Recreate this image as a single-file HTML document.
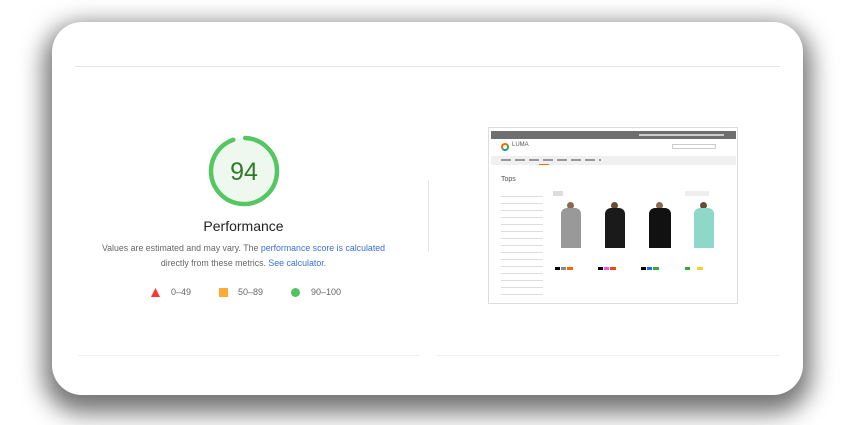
<!DOCTYPE html>
<html><head><style>
*{margin:0;padding:0;box-sizing:border-box}
body{width:853px;height:425px;background:#fff;position:relative;overflow:hidden;font-family:"Liberation Sans",sans-serif}
.card{position:absolute;left:52px;top:22px;width:751px;height:373px;background:#fff;border-radius:30px;box-shadow:0 10px 24px 8px rgba(0,0,0,.55)}
.abs{position:absolute}
.line{position:absolute;height:1px;background:#e8e8e8}
.t{position:absolute;white-space:nowrap}
</style></head><body>
<div class="card"></div>
<div class="line" style="left:75px;top:66px;width:705px;background:#e4e4e4"></div>
<div class="line" style="left:78px;top:355px;width:342px;background:#f0f0f0"></div>
<div class="line" style="left:437px;top:355px;width:343px;background:#f0f0f0"></div>
<div class="abs" style="left:428px;top:180px;width:1px;height:72px;background:#e6e6e6"></div>

<svg class="abs" style="left:204px;top:131px" width="80" height="80" viewBox="0 0 80 80">
<circle cx="40" cy="40" r="33" fill="#eef8ef"/>
<circle cx="40" cy="40" r="33" fill="none" stroke="#56c662" stroke-width="4.5" stroke-dasharray="194.9 207.3" transform="rotate(-88 40 40)" stroke-linecap="round"/>
<text x="40" y="49" text-anchor="middle" font-family="Liberation Sans" font-size="25" fill="#2f7a2a">94</text>
</svg>
<div class="t" style="left:0;width:487px;text-align:center;top:218px;font-size:14px;color:#212121">Performance</div>
<div class="t" style="left:0;width:487px;text-align:center;top:243px;font-size:8.8px;color:#666">Values are estimated and may vary. The <span style="color:#3b6fd6">performance score is calculated</span></div>
<div class="t" style="left:0;width:487px;text-align:center;top:258px;font-size:8.8px;color:#666">directly from these metrics. <span style="color:#3b6fd6">See calculator.</span></div>
<svg class="abs" style="left:150px;top:287px" width="11" height="11"><polygon points="5.5,1 10,10 1,10" fill="#f33"/></svg>
<div class="t" style="left:171px;top:287px;font-size:9px;color:#666">0–49</div>
<div class="abs" style="left:219px;top:288px;width:9px;height:9px;background:#fa3"></div>
<div class="t" style="left:238px;top:287px;font-size:9px;color:#666">50–89</div>
<div class="abs" style="left:291px;top:288px;width:9px;height:9px;border-radius:50%;background:#52c45f"></div>
<div class="t" style="left:311px;top:287px;font-size:9px;color:#666">90–100</div>

<!-- thumbnail -->
<div class="abs" style="left:488px;top:127px;width:250px;height:177px;border:1px solid #ddd;background:#fff;overflow:hidden">
 <div class="abs" style="left:2px;top:3px;width:245px;height:8px;background:#6e6e6e"></div>
 <div class="abs" style="left:150px;top:6px;width:85px;height:2px;background:#ccc"></div>
 <div class="abs" style="left:12px;top:15px;width:8px;height:8px;border-radius:50%;border:2px solid #f60;border-right-color:#3a3;border-bottom-color:#09c"></div>
 <div class="t" style="left:23px;top:14px;font-size:6px;color:#555">LUMA</div>
 <div class="abs" style="left:183px;top:16px;width:44px;height:5px;border:1px solid #ccc"></div>
 <div class="abs" style="left:2px;top:28px;width:245px;height:9px;background:#f0f0f0"></div>
 <div class="abs" style="left:12px;top:31px;width:100px;height:2px;background:repeating-linear-gradient(90deg,#999 0 10px,transparent 10px 14px)"></div>
 <div class="abs" style="left:50px;top:36px;width:10px;height:1px;background:#f60"></div>
 <div class="t" style="left:12px;top:48px;font-size:7px;color:#555">Tops</div>
 <div class="abs" style="left:12px;top:62px;width:42px;height:110px;background:repeating-linear-gradient(180deg,#fff 0 6px,#ddd 6px 7px)"></div>
 <div class="abs" style="left:64px;top:63px;width:10px;height:5px;background:#ddd"></div>
 <div class="abs" style="left:196px;top:63px;width:24px;height:5px;background:#eee"></div>
 <div class="abs" style="left:78px;top:74px;width:7px;height:7px;border-radius:50%;background:#8a6a50"></div>
 <div class="abs" style="left:122px;top:74px;width:7px;height:7px;border-radius:50%;background:#6a4a30"></div>
 <div class="abs" style="left:167px;top:74px;width:7px;height:7px;border-radius:50%;background:#8a6a50"></div>
 <div class="abs" style="left:211px;top:74px;width:7px;height:7px;border-radius:50%;background:#6a4a30"></div>
 <div class="abs" style="left:72px;top:80px;width:20px;height:40px;background:#999;border-radius:6px 6px 0 0"></div>
 <div class="abs" style="left:116px;top:80px;width:20px;height:40px;background:#1a1a1a;border-radius:6px 6px 0 0"></div>
 <div class="abs" style="left:160px;top:80px;width:22px;height:40px;background:#111;border-radius:6px 6px 0 0"></div>
 <div class="abs" style="left:205px;top:80px;width:20px;height:40px;background:#8dd8c8;border-radius:6px 6px 0 0"></div>
 <div class="abs" style="left:66px;top:139px;width:18px;height:3px;background:linear-gradient(90deg,#000 0 5px,#fff 5px 6px,#888 6px 11px,#fff 11px 12px,#f60 12px)"></div>
 <div class="abs" style="left:109px;top:139px;width:18px;height:3px;background:linear-gradient(90deg,#000 0 5px,#fff 5px 6px,#e5e 6px 11px,#fff 11px 12px,#f40 12px)"></div>
 <div class="abs" style="left:152px;top:139px;width:18px;height:3px;background:linear-gradient(90deg,#000 0 5px,#fff 5px 6px,#26e 6px 11px,#fff 11px 12px,#3a3 12px)"></div>
 <div class="abs" style="left:196px;top:139px;width:18px;height:3px;background:linear-gradient(90deg,#3a3 0 5px,#fff 5px 12px,#fc3 12px)"></div>
</div>
</body></html>
